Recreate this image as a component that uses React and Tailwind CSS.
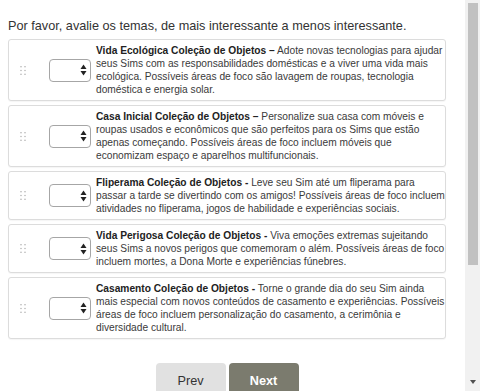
const THEMES = [
  {
    title: 'Vida Ecológica Coleção de Objetos –',
    text: 'Adote novas tecnologias para ajudar seus Sims com as responsabilidades domésticas e a viver uma vida mais ecológica. Possíveis áreas de foco são lavagem de roupas, tecnologia doméstica e energia solar.',
  },
  {
    title: 'Casa Inicial Coleção de Objetos –',
    text: 'Personalize sua casa com móveis e roupas usados e econômicos que são perfeitos para os Sims que estão apenas começando. Possíveis áreas de foco incluem móveis que economizam espaço e aparelhos multifuncionais.',
  },
  {
    title: 'Fliperama Coleção de Objetos -',
    text: 'Leve seu Sim até um fliperama para passar a tarde se divertindo com os amigos! Possíveis áreas de foco incluem atividades no fliperama, jogos de habilidade e experiências sociais.',
  },
  {
    title: 'Vida Perigosa Coleção de Objetos -',
    text: 'Viva emoções extremas sujeitando seus Sims a novos perigos que comemoram o além. Possíveis áreas de foco incluem mortes, a Dona Morte e experiências fúnebres.',
  },
  {
    title: 'Casamento Coleção de Objetos -',
    text: 'Torne o grande dia do seu Sim ainda mais especial com novos conteúdos de casamento e experiências. Possíveis áreas de foco incluem personalização do casamento, a cerimônia e diversidade cultural.',
  },
]

export default function App() {
  return (
    <div className="flex h-[391px] w-[500px] overflow-hidden bg-white font-['Liberation_Sans',Arial,sans-serif] text-[#333]">
      <div className="w-[465px] shrink-0 pl-2 pr-[19px] pt-[18px]">
        <p className="mb-[5px] text-[12.7px] leading-4 text-[#333]">
          Por favor, avalie os temas, de mais interessante a menos interessante.
        </p>

        <ul className="flex flex-col gap-1">
          {THEMES.map((t) => (
            <li key={t.title} className="flex items-center rounded-[3px] border border-[#dcdcdc] bg-white py-1 shadow-[0_1px_1px_rgba(0,0,0,0.04)]">
              <div className="w-[40px] shrink-0 pl-[11px]">
                <Grip />
              </div>
              <RankSelect />
              <p className="ml-[5px] flex-1 text-[10.2px] leading-[13px] text-[#3a3a3a]">
                <b className="font-bold text-[#222]">{t.title}</b> {t.text}
              </p>
            </li>
          ))}
        </ul>

        <div className="mt-6 flex justify-center gap-[3px]">
          <button className="h-[34px] w-[70px] rounded-t-[4px] bg-[#e1e1e1] pt-1 text-[12.7px] text-[#333]">
            Prev
          </button>
          <button className="h-[34px] w-[70px] rounded-t-[4px] bg-[#7b7b6e] pt-1 text-[12.7px] font-bold text-white">
            Next
          </button>
        </div>
      </div>

      {/* scrollbar */}
      <div className="flex w-[15px] shrink-0 flex-col items-center bg-[#f1f1f1]">
        <div className="mt-[3px] h-[262px] w-[10px] bg-[#c1c1c1]" />
        <div className="flex-1" />
        <svg width="6" height="4" viewBox="0 0 6 4" className="mb-[7px]">
          <path d="M0 0 L6 0 L3 4 Z" fill="#505050" />
        </svg>
      </div>
    </div>
  )
}

function Grip() {
  return (
    <svg width="7" height="9" viewBox="0 0 7 9">
      {[0.75, 4.5, 8.25].map((y) =>
        [1, 5].map((x) => <circle key={`${x}-${y}`} cx={x} cy={y} r="0.8" fill="#b8b8b8" />)
      )}
    </svg>
  )
}

function RankSelect() {
  return (
    <div className="flex h-[23px] w-[42px] shrink-0 items-center justify-end rounded-[4px] border border-[#a6a6a6] bg-white pr-[3px]">
      <svg width="7" height="12" viewBox="0 0 7 12">
        <path d="M0.5 5 L3.5 0.5 L6.5 5 Z" fill="#222" />
        <path d="M0.5 7 L3.5 11.5 L6.5 7 Z" fill="#222" />
      </svg>
    </div>
  )
}
